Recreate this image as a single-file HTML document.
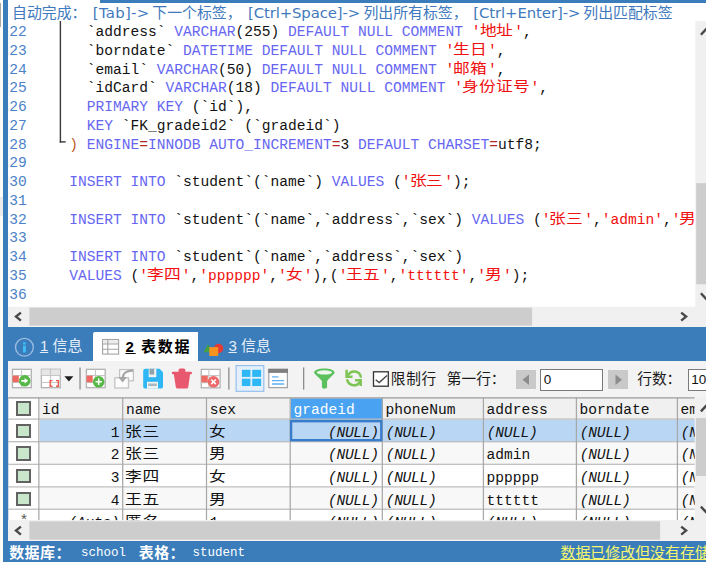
<!DOCTYPE html>
<html><head><meta charset="utf-8"><title>SQLyog</title>
<style>
html,body{margin:0;padding:0;}
body{width:706px;height:562px;overflow:hidden;position:relative;background:#fff;font-family:"Liberation Sans","Noto Sans CJK SC",sans-serif;}
div,span{box-sizing:border-box;}
.abs{position:absolute;}
#leftgrey{left:0;top:0;width:3.5px;height:562px;background:#fdfdfd;}
#leftblue{left:3.3px;top:0;width:4.8px;height:562px;background:#3b7dbb;}
#topblue{left:100px;top:0;width:606px;height:2.8px;background:#3b7dbb;}
.hint{position:absolute;top:3.5px;height:19px;line-height:19px;font-size:14.9px;color:#4079bd;white-space:nowrap;}
.hint.l{font-family:"DejaVu Sans","Liberation Sans",sans-serif;}
/* code */
.ln{position:absolute;left:9.3px;height:18.75px;line-height:18.75px;font-family:"Liberation Mono",monospace;font-size:14.583px;color:#4b82c8;}
.cl{position:absolute;left:69.3px;height:18.75px;line-height:18.75px;font-family:"Liberation Mono",monospace;font-size:14.583px;color:#111;white-space:pre;max-width:624.3px;overflow:hidden;}
.k{color:#6666f2;}
.s{color:#f01010;}
.o{color:#b02828;}
.br{color:#c25a2a;}
.c{display:inline-block;width:16.87px;height:18.75px;line-height:15.5px;vertical-align:top;font-size:14.2px;position:relative;left:-1px;text-align:left;font-family:"Liberation Sans","Noto Sans CJK SC",sans-serif;font-weight:400;transform:scaleX(1.18);transform-origin:0 50%;}
#foldv{left:59.3px;top:21px;width:1.25px;height:121.5px;background:#3c3c3c;}
#foldh{left:59.3px;top:141.3px;width:6.6px;height:1.25px;background:#3c3c3c;}
/* scrollbars */
.sb{background:#f0f0f0;}
.thumb{background:#cdcdcd;}
.arr{position:absolute;font-family:"DejaVu Sans",sans-serif;color:#505050;font-weight:bold;}
/* tab bar */
#tabbar{left:8px;top:326.5px;width:698px;height:35px;background:#3b7dbb;}
#tabact{left:93px;top:332.2px;width:105px;height:29px;background:#fff;border-radius:2px 0 0 0;}
.tabtxt{position:absolute;font-size:15px;line-height:20px;white-space:nowrap;}
/* toolbar */
#toolbar{left:8px;top:361px;width:698px;height:36.2px;background:#f3f3f3;}
.sep{position:absolute;width:1.3px;background:#8a8a8a;top:367.5px;height:22px;}
.tbtxt{position:absolute;font-size:14.7px;line-height:20px;color:#1a1a1a;white-space:nowrap;top:369px;}
.inp{position:absolute;top:368.7px;height:22px;border:1.5px solid #7a7a7a;background:#fff;font-size:13.5px;line-height:20px;padding-left:2.5px;color:#111;}
.navb{position:absolute;top:369.6px;height:19.9px;width:20px;background:#c9c9c9;}
/* grid */
#gridbg{left:8px;top:397.2px;width:686px;height:123.3px;background:#fff;}
.gh,.gc{position:absolute;font-family:"Liberation Mono","Noto Serif CJK SC",monospace;font-size:14.583px;line-height:26.3px;color:#111;white-space:nowrap;overflow:hidden;padding-left:2.6px;}
.gh{background:#f0f0f0;line-height:27.3px;padding-left:2.6px;}
.ghsel{background:#4aa3f2;color:#fff;}
.gc{background:#fff;}
.gc.sel{background:#b9d7f5;}
.gc.alt{background:#f8f8f8;}
.gc.gcb,.gh.gcb,.gc.gcb.alt{background:#fff;}
.gc.r{text-align:right;padding-right:3.7px;}
.gc.nul{font-style:italic;letter-spacing:-0.3px;padding-left:2.8px;}
.gc.nul.r{padding-right:4.2px;}
.gc.cj{padding-left:2px;}
.cjs{display:inline-block;font-size:14.2px;letter-spacing:0.63px;font-family:"Liberation Sans","Noto Sans CJK SC",sans-serif;font-weight:400;transform:scaleX(1.18);transform-origin:0 50%;line-height:22.5px;vertical-align:top;}
.gc.focus{}
.cbx{position:absolute;left:7.5px;top:4px;width:15px;height:14.5px;border:2px solid #626262;background:#c8e6c9;}
.gh .cbx{top:3.9px;}
.star{position:absolute;left:11.5px;top:-1px;font-size:15px;color:#555;}
#status{left:3.3px;top:540.7px;width:703px;height:21.3px;background:#3b7dbb;}
.st{position:absolute;top:544.3px;height:18px;line-height:18px;color:#fff;white-space:nowrap;}
</style></head><body>
<div id="leftgrey" class="abs"></div>
<div id="leftblue" class="abs"></div>
<div id="topblue" class="abs"></div>
<div class="abs" style="left:0;top:2.5px;width:1px;height:24.5px;background:#a8a8a8"></div>
<div class="abs" style="left:0;top:197px;width:3.3px;height:19px;background:#ececec"></div>

<span class="hint" style="left:12px">自动完成：</span>
<span class="hint l" style="left:92.8px;letter-spacing:0.28px">[Tab]-&gt;</span>
<span class="hint" style="left:152.3px">下一个标签，</span>
<span class="hint l" style="left:248px;letter-spacing:-0.13px">[Ctrl+Space]-&gt;</span>
<span class="hint" style="left:363.4px">列出所有标签，</span>
<span class="hint l" style="left:473.3px;letter-spacing:-0.1px">[Ctrl+Enter]-&gt;</span>
<span class="hint" style="left:583.3px">列出匹配标签</span>

<svg class="abs" style="left:50px;top:20px" width="30" height="130" viewBox="50 20 30 130"><rect x="59.7" y="21" width="1.4" height="121.6" fill="#3a3a3a"/><rect x="59.7" y="141.2" width="6" height="1.4" fill="#3a3a3a"/></svg>
<div class="ln" style="top:23.20px">22</div><div class="cl" style="top:23.20px">  `address` <span class="k">VARCHAR</span>(255) <span class="k">DEFAULT NULL COMMENT </span><span class="s">'<span class="c">地</span><span class="c">址</span>'</span>,</div>
<div class="ln" style="top:41.95px">23</div><div class="cl" style="top:41.95px">  `borndate` <span class="k">DATETIME DEFAULT NULL COMMENT </span><span class="s">'<span class="c">生</span><span class="c">日</span>'</span>,</div>
<div class="ln" style="top:60.70px">24</div><div class="cl" style="top:60.70px">  `email` <span class="k">VARCHAR</span>(50) <span class="k">DEFAULT NULL COMMENT </span><span class="s">'<span class="c">邮</span><span class="c">箱</span>'</span>,</div>
<div class="ln" style="top:79.45px">25</div><div class="cl" style="top:79.45px">  `idCard` <span class="k">VARCHAR</span>(18) <span class="k">DEFAULT NULL COMMENT </span><span class="s">'<span class="c">身</span><span class="c">份</span><span class="c">证</span><span class="c">号</span>'</span>,</div>
<div class="ln" style="top:98.20px">26</div><div class="cl" style="top:98.20px">  <span class="k">PRIMARY KEY </span>(`id`),</div>
<div class="ln" style="top:116.95px">27</div><div class="cl" style="top:116.95px">  <span class="k">KEY </span>`FK_gradeid2` (`gradeid`)</div>
<div class="ln" style="top:135.70px">28</div><div class="cl" style="top:135.70px"><span class="br">)</span> <span class="k">ENGINE</span><span class="o">=</span><span class="k">INNODB AUTO_INCREMENT</span><span class="o">=</span>3 <span class="k">DEFAULT CHARSET</span><span class="o">=</span>utf8;</div>
<div class="ln" style="top:154.45px">29</div>
<div class="ln" style="top:173.20px">30</div><div class="cl" style="top:173.20px"><span class="k">INSERT INTO </span>`student`(`name`) <span class="k">VALUES </span>(<span class="s">'<span class="c">张</span><span class="c">三</span>'</span>);</div>
<div class="ln" style="top:191.95px">31</div>
<div class="ln" style="top:210.70px">32</div><div class="cl" style="top:210.70px"><span class="k">INSERT INTO </span>`student`(`name`,`address`,`sex`) <span class="k">VALUES </span>(<span class="s">'<span class="c">张</span><span class="c">三</span>'</span>,<span class="s">'admin'</span>,<span class="s">'<span class="c">男</span>'</span>);</div>
<div class="ln" style="top:229.45px">33</div>
<div class="ln" style="top:248.20px">34</div><div class="cl" style="top:248.20px"><span class="k">INSERT INTO </span>`student`(`name`,`address`,`sex`)</div>
<div class="ln" style="top:266.95px">35</div><div class="cl" style="top:266.95px"><span class="k">VALUES </span>(<span class="s">'<span class="c">李</span><span class="c">四</span>'</span>,<span class="s">'pppppp'</span>,<span class="s">'<span class="c">女</span>'</span>),(<span class="s">'<span class="c">王</span><span class="c">五</span>'</span>,<span class="s">'tttttt'</span>,<span class="s">'<span class="c">男</span>'</span>);</div>
<div class="ln" style="top:285.70px">36</div>

<!-- code scrollbars -->
<svg class="abs" style="left:0;top:20px" width="706" height="308" viewBox="0 20 706 308">
<rect x="695.3" y="21" width="11" height="286" fill="#f0f0f0"/>
<rect x="696.2" y="183.2" width="10" height="101.1" fill="#cdcdcd"/>
<rect x="8" y="306.8" width="698" height="20" fill="#f0f0f0"/>
<rect x="29.4" y="307.6" width="502.7" height="18.1" fill="#cdcdcd"/>
<path d="M20.9 312.6 L16 316.6 L20.9 320.6" fill="none" stroke="#484848" stroke-width="2.4"/>
<path d="M681.2 312.6 L686.1 316.6 L681.2 320.6" fill="none" stroke="#484848" stroke-width="2.4"/>
<path d="M700.9 34.8 L706 29.3 L711 34.8" fill="none" stroke="#484848" stroke-width="2.4"/>
<path d="M700.9 293.2 L706 298.7 L711 293.2" fill="none" stroke="#484848" stroke-width="2.4"/>
</svg>

<!-- tab bar -->
<div id="tabbar" class="abs"></div>
<div id="tabact" class="abs"></div>
<svg class="abs" style="left:0;top:326px" width="706" height="36" viewBox="0 326 706 36">
<circle cx="24.4" cy="347.3" r="8.9" fill="none" stroke="#9dbde2" stroke-width="1.3"/><rect x="23" y="345.6" width="2.9" height="6.9" fill="#3fbcf5"/><rect x="23" y="342.4" width="2.9" height="2.1" fill="#3fbcf5"/>
<rect x="102.6" y="339.5" width="16" height="14.6" fill="#fff" stroke="#a4a4a4" stroke-width="1.1"/><rect x="103.2" y="340.1" width="14.8" height="3.6" fill="#ececec"/><path d="M102.6 344H118.6M102.6 349.2H118.6M107.8 339.5V354.1" stroke="#a4a4a4" stroke-width="1.1" fill="none"/>
<circle cx="218.6" cy="348.5" r="4.7" fill="#e53935"/><path d="M203.4 352.2L207.9 344.2L212.4 352.2Z" fill="#43a047"/><rect x="209.3" y="347.1" width="8.9" height="8.9" fill="#f7931e"/>
</svg>
<span class="tabtxt" style="left:39.9px;top:335.6px;color:#e4edf7"><u>1</u> 信息</span>
<span class="tabtxt" style="left:125.5px;top:336.5px;color:#000;font-weight:bold;letter-spacing:1.8px;word-spacing:-0.6px"><u>2</u> 表数据</span>
<span class="tabtxt" style="left:228.5px;top:335.6px;color:#e4edf7"><u>3</u> 信息</span>

<!-- toolbar -->
<div id="toolbar" class="abs"></div>
<svg class="abs" style="left:0;top:361px" width="706" height="38" viewBox="0 361 706 38">
<rect x="12.5" y="369.3" width="18.8" height="18.4" fill="#fff" stroke="#b2b2b2" stroke-width="1.3"/><path d="M12.0 375.5H31.8M12.0 382.5H31.8M21.6 368.8V388.2" stroke="#c6c6c6" stroke-width="1.1" fill="none"/><rect x="12.6" y="375.6" width="6.2" height="6.6" fill="#ef6a62"/><circle cx="24.7" cy="380.8" r="5.8" fill="#56b947"/><path d="M21.3 379.9H24.6V378L28.2 380.8L24.6 383.6V381.7H21.3Z" fill="#fff"/>
<rect x="41.4" y="369.3" width="18.8" height="18.4" fill="#fff" stroke="#b2b2b2" stroke-width="1.3"/><path d="M40.9 375.5H60.7M40.9 382.5H60.7M50.5 368.8V388.2" stroke="#c6c6c6" stroke-width="1.1" fill="none"/><rect x="41.5" y="369.4" width="18.6" height="6" fill="#e6e6e6"/><path d="M40.9 375.5H60.7M50.5 368.8V388.2" stroke="#c6c6c6" stroke-width="1.1" fill="none"/><path d="M52.5 380.6H50.2V386.3H52.5M56 380.6H58.3V386.3H56" stroke="#ef5a4e" stroke-width="1.4" fill="none"/><path d="M64.4 376.2H73.4L68.9 381.6Z" fill="#1e1e1e"/>
<rect x="79.4" y="367.5" width="1.3" height="22" fill="#8c8c8c"/>
<rect x="86.4" y="369.3" width="18.8" height="18.4" fill="#fff" stroke="#b2b2b2" stroke-width="1.3"/><path d="M85.9 375.5H105.7M85.9 382.5H105.7M95.5 368.8V388.2" stroke="#c6c6c6" stroke-width="1.1" fill="none"/><rect x="86.5" y="375.6" width="6.2" height="6.6" fill="#ef6a62"/><circle cx="98.7" cy="381.8" r="5.8" fill="#56b947"/><path d="M95.5 381.8H101.9M98.7 378.6V385" stroke="#fff" stroke-width="1.5" fill="none"/>
<rect x="119.6" y="369.6" width="13.8" height="11.2" fill="#fcfcfc" stroke="#c4c4c4" stroke-width="1.3"/><rect x="114.8" y="377.8" width="13.7" height="10.2" fill="#fcfcfc" stroke="#c4c4c4" stroke-width="1.3"/><path d="M133 370.6C126.5 370.3 122.7 373.3 122.6 378.5" stroke="#a6a6a6" stroke-width="2.1" fill="none"/><path d="M118.2 377H127L122.6 382.5Z" fill="#a6a6a6"/>
<path d="M143.2 371Q143.2 368.8 145.4 368.8H159.6L163 372.2V386.4Q163 388.6 160.8 388.6H145.4Q143.2 388.6 143.2 386.4Z" fill="#2fb7f5"/><rect x="148.7" y="368.8" width="7.6" height="8.4" fill="#f4f4f4"/><rect x="149.5" y="368.8" width="4.7" height="5.8" fill="#8fa3ad"/><rect x="147" y="381.8" width="11" height="6.8" fill="#f4f4f4"/><rect x="148.2" y="383.5" width="8.6" height="2.6" fill="#a9b8c0"/>
<g fill="#e8586e"><rect x="178.6" y="368.4" width="6.8" height="5" rx="1.7"/><rect x="171.8" y="371.7" width="20.2" height="2.6" rx="1.2"/><path d="M173.8 374H190.1L188.3 387Q188.1 388.6 186.5 388.6H177.6Q176 388.6 175.8 387Z"/></g>
<rect x="201.3" y="369.4" width="18.8" height="18.4" fill="#fff" stroke="#b2b2b2" stroke-width="1.3"/><path d="M200.8 375.6H220.6M200.8 382.6H220.6M208.9 368.9V388.3" stroke="#c6c6c6" stroke-width="1.1" fill="none"/><rect x="201.4" y="375.7" width="6.4" height="6.6" fill="#ef6a62"/><circle cx="213.5" cy="381.8" r="5.8" fill="#ee6a6a"/><path d="M211.2 379.5L215.8 384.1M215.8 379.5L211.2 384.1" stroke="#fff" stroke-width="1.5" fill="none"/>
<rect x="228.2" y="367.4" width="1.3" height="22.2" fill="#8c8c8c"/>
<rect x="236.1" y="365.6" width="27.7" height="25.7" fill="#e3effb" stroke="#8fbcee" stroke-width="1.1"/><rect x="241.9" y="369.8" width="8.5" height="7.1" fill="#2db8f5"/><rect x="252.2" y="369.8" width="8.9" height="7.1" fill="#2db8f5"/><rect x="241.9" y="378.7" width="8.5" height="7.3" fill="#2db8f5"/><rect x="252.2" y="378.7" width="8.9" height="7.3" fill="#2db8f5"/>
<rect x="268.8" y="369.4" width="18.6" height="18.2" fill="#fff" stroke="#a2a2a2" stroke-width="1.2"/><rect x="268.2" y="368.8" width="19.8" height="4.1" fill="#808080"/><path d="M272 376.9H278.4M272 380.7H284.2M272 384H284.2" stroke="#5eb2f4" stroke-width="1.3"/>
<rect x="303" y="367.4" width="1.3" height="22.2" fill="#8c8c8c"/>
<path d="M314.1 372.6C314.1 367 334.6 367 334.6 372.6C334.6 374 332 375.5 327.1 381V387.1Q327.1 388.8 324.5 388.8Q321.9 388.8 321.9 387.1V381C317 375.5 314.1 374 314.1 372.6Z" fill="#5cc05c"/><ellipse cx="324.4" cy="372.4" rx="7.7" ry="2.1" fill="#eef8ee"/>
<g fill="none" stroke="#7fc556" stroke-width="2.5" stroke-linecap="round"><path d="M360.8 376.6A6.9 6.9 0 0 0 348.3 374.6"/><path d="M347.3 380.2A6.9 6.9 0 0 0 359.7 382.2"/></g><g fill="none" stroke="#7fc556" stroke-width="2.5"><path d="M346.6 369.7V376.7H352.5"/><path d="M355.1 380.2H360.7V386"/></g>
<rect x="373.5" y="371.8" width="14.8" height="14.4" fill="#fff" stroke="#333" stroke-width="1.3"/><path d="M375.7 379.7L379.2 382.6L387 375.5" fill="none" stroke="#444" stroke-width="1.3"/>
</svg>
<span class="tbtxt" style="left:390.7px;letter-spacing:0.75px">限制行</span>
<span class="tbtxt" style="left:446.8px">第一行：</span>
<div class="navb" style="left:515.6px"><svg width="20" height="20" viewBox="0 0 20 20"><path d="M13 4.5V15L6.5 9.7Z" fill="#8c8c8c"/></svg></div>
<div class="inp" style="left:540.3px;width:62.7px">0</div>
<div class="navb" style="left:608.2px"><svg width="20" height="20" viewBox="0 0 20 20"><path d="M7.5 4.5V15L14 9.7Z" fill="#8c8c8c"/></svg></div>
<span class="tbtxt" style="left:637.2px">行数：</span>
<div class="inp" style="left:687.8px;width:30px">10</div>

<!-- grid -->
<div id="gridbg" class="abs"></div>
<div class="gh gcb" style="left:8px;top:397.2px;width:31.5px;height:22.5px"><span class="cbx"></span></div><div class="gh" style="left:39.5px;top:397.2px;width:83.8px;height:22.5px">id</div><div class="gh" style="left:123.3px;top:397.2px;width:83.8px;height:22.5px">name</div><div class="gh" style="left:207.1px;top:397.2px;width:83.70000000000002px;height:22.5px">sex</div><div class="gh ghsel" style="left:290.8px;top:397.2px;width:92.09999999999997px;height:22.5px">gradeid</div><div class="gh" style="left:382.9px;top:397.2px;width:101.10000000000002px;height:22.5px">phoneNum</div><div class="gh" style="left:484px;top:397.2px;width:93px;height:22.5px">address</div><div class="gh" style="left:577px;top:397.2px;width:101px;height:22.5px">borndate</div><div class="gh" style="left:678px;top:397.2px;width:16.700000000000045px;height:22.5px">em</div>
<div class="gc gcb" style="left:8px;top:419.7px;width:31.5px;height:22.600000000000023px"><span class="cbx"></span></div><div class="gc sel r" style="left:39.5px;top:419.7px;width:83.8px;height:22.600000000000023px">1</div><div class="gc sel cj" style="left:123.3px;top:419.7px;width:83.8px;height:22.600000000000023px"><span class="cjs">张三</span></div><div class="gc sel cj" style="left:207.1px;top:419.7px;width:83.70000000000002px;height:22.600000000000023px"><span class="cjs">女</span></div><div class="gc sel nul r focus" style="left:290.8px;top:419.7px;width:92.09999999999997px;height:22.600000000000023px">(NULL)</div><div class="gc sel nul" style="left:382.9px;top:419.7px;width:101.10000000000002px;height:22.600000000000023px">(NULL)</div><div class="gc sel nul" style="left:484px;top:419.7px;width:93px;height:22.600000000000023px">(NULL)</div><div class="gc sel nul" style="left:577px;top:419.7px;width:101px;height:22.600000000000023px">(NULL)</div><div class="gc sel nul" style="left:678px;top:419.7px;width:16.700000000000045px;height:22.600000000000023px">(N</div>
<div class="gc gcb" style="left:8px;top:442.3px;width:31.5px;height:22.599999999999966px"><span class="cbx"></span></div><div class="gc alt r" style="left:39.5px;top:442.3px;width:83.8px;height:22.599999999999966px">2</div><div class="gc alt cj" style="left:123.3px;top:442.3px;width:83.8px;height:22.599999999999966px"><span class="cjs">张三</span></div><div class="gc alt cj" style="left:207.1px;top:442.3px;width:83.70000000000002px;height:22.599999999999966px"><span class="cjs">男</span></div><div class="gc alt nul r" style="left:290.8px;top:442.3px;width:92.09999999999997px;height:22.599999999999966px">(NULL)</div><div class="gc alt nul" style="left:382.9px;top:442.3px;width:101.10000000000002px;height:22.599999999999966px">(NULL)</div><div class="gc alt" style="left:484px;top:442.3px;width:93px;height:22.599999999999966px">admin</div><div class="gc alt nul" style="left:577px;top:442.3px;width:101px;height:22.599999999999966px">(NULL)</div><div class="gc alt nul" style="left:678px;top:442.3px;width:16.700000000000045px;height:22.599999999999966px">(N</div>
<div class="gc gcb" style="left:8px;top:464.9px;width:31.5px;height:22.600000000000023px"><span class="cbx"></span></div><div class="gc r" style="left:39.5px;top:464.9px;width:83.8px;height:22.600000000000023px">3</div><div class="gc cj" style="left:123.3px;top:464.9px;width:83.8px;height:22.600000000000023px"><span class="cjs">李四</span></div><div class="gc cj" style="left:207.1px;top:464.9px;width:83.70000000000002px;height:22.600000000000023px"><span class="cjs">女</span></div><div class="gc nul r" style="left:290.8px;top:464.9px;width:92.09999999999997px;height:22.600000000000023px">(NULL)</div><div class="gc nul" style="left:382.9px;top:464.9px;width:101.10000000000002px;height:22.600000000000023px">(NULL)</div><div class="gc" style="left:484px;top:464.9px;width:93px;height:22.600000000000023px">pppppp</div><div class="gc nul" style="left:577px;top:464.9px;width:101px;height:22.600000000000023px">(NULL)</div><div class="gc nul" style="left:678px;top:464.9px;width:16.700000000000045px;height:22.600000000000023px">(N</div>
<div class="gc gcb" style="left:8px;top:487.5px;width:31.5px;height:22.30000000000001px"><span class="cbx"></span></div><div class="gc alt r" style="left:39.5px;top:487.5px;width:83.8px;height:22.30000000000001px">4</div><div class="gc alt cj" style="left:123.3px;top:487.5px;width:83.8px;height:22.30000000000001px"><span class="cjs">王五</span></div><div class="gc alt cj" style="left:207.1px;top:487.5px;width:83.70000000000002px;height:22.30000000000001px"><span class="cjs">男</span></div><div class="gc alt nul r" style="left:290.8px;top:487.5px;width:92.09999999999997px;height:22.30000000000001px">(NULL)</div><div class="gc alt nul" style="left:382.9px;top:487.5px;width:101.10000000000002px;height:22.30000000000001px">(NULL)</div><div class="gc alt" style="left:484px;top:487.5px;width:93px;height:22.30000000000001px">tttttt</div><div class="gc alt nul" style="left:577px;top:487.5px;width:101px;height:22.30000000000001px">(NULL)</div><div class="gc alt nul" style="left:678px;top:487.5px;width:16.700000000000045px;height:22.30000000000001px">(N</div>
<div class="gc gcb" style="left:8px;top:509.8px;width:31.5px;height:22.599999999999966px"><span class="star">*</span></div><div class="gc nul r" style="left:39.5px;top:509.8px;width:83.8px;height:22.599999999999966px">(Auto)</div><div class="gc cj" style="left:123.3px;top:509.8px;width:83.8px;height:22.599999999999966px"><span class="cjs">匿名</span></div><div class="gc" style="left:207.1px;top:509.8px;width:83.70000000000002px;height:22.599999999999966px">1</div><div class="gc nul r" style="left:290.8px;top:509.8px;width:92.09999999999997px;height:22.599999999999966px">(NULL)</div><div class="gc nul" style="left:382.9px;top:509.8px;width:101.10000000000002px;height:22.599999999999966px">(NULL)</div><div class="gc nul" style="left:484px;top:509.8px;width:93px;height:22.599999999999966px">(NULL)</div><div class="gc nul" style="left:577px;top:509.8px;width:101px;height:22.599999999999966px">(NULL)</div><div class="gc nul" style="left:678px;top:509.8px;width:16.700000000000045px;height:22.599999999999966px">(N</div>
<svg class="abs" style="left:0;top:396px" width="706" height="125" viewBox="0 396 706 125"><rect x="8" y="397" width="686.7" height="1.7" fill="#b2b2b2"/><rect x="8" y="398.7" width="1" height="121.6" fill="#cfdbe9"/><rect x="8" y="418.48" width="686.7" height="1.25" fill="#bdbdbd"/><rect x="8" y="441.08" width="686.7" height="1.25" fill="#bdbdbd"/><rect x="8" y="463.68" width="686.7" height="1.25" fill="#bdbdbd"/><rect x="8" y="486.28" width="686.7" height="1.25" fill="#bdbdbd"/><rect x="8" y="508.58" width="686.7" height="1.25" fill="#bdbdbd"/><rect x="38.23" y="397" width="1.25" height="123.3" fill="#a8a8a8"/><rect x="122.08" y="397" width="1.25" height="123.3" fill="#a8a8a8"/><rect x="205.88" y="397" width="1.25" height="123.3" fill="#a8a8a8"/><rect x="289.58" y="397" width="1.25" height="123.3" fill="#a8a8a8"/><rect x="381.68" y="397" width="1.25" height="123.3" fill="#a8a8a8"/><rect x="482.78" y="397" width="1.25" height="123.3" fill="#a8a8a8"/><rect x="575.78" y="397" width="1.25" height="123.3" fill="#a8a8a8"/><rect x="676.78" y="397" width="1.25" height="123.3" fill="#a8a8a8"/><rect x="291.1" y="421.2" width="90.2" height="19" fill="none" stroke="#3a7ccc" stroke-width="2.4"/></svg>
<!-- grid scrollbars -->
<svg class="abs" style="left:0;top:396px" width="706" height="146" viewBox="0 396 706 146">
<rect x="694.7" y="397" width="12" height="124" fill="#f0f0f0"/>
<rect x="695.9" y="418.1" width="11" height="57.9" fill="#cdcdcd"/>
<rect x="8" y="520.1" width="698" height="20.6" fill="#f0f0f0"/>
<rect x="29.4" y="521.3" width="630.7" height="18.4" fill="#cdcdcd"/>
<path d="M20.9 526.6 L16 530.6 L20.9 534.6" fill="none" stroke="#484848" stroke-width="2.4"/>
<path d="M681.2 526.6 L686.1 530.6 L681.2 534.6" fill="none" stroke="#484848" stroke-width="2.4"/>
<path d="M700.9 411.4 L705.6 406.3 L710.3 411.4" fill="none" stroke="#484848" stroke-width="2.4"/>
<path d="M700.9 506.6 L705.6 511.7 L710.3 506.6" fill="none" stroke="#484848" stroke-width="2.4"/>
</svg>

<!-- status -->
<div id="status" class="abs"></div>
<span class="st" style="left:9.2px;font-weight:bold;font-size:15px;letter-spacing:0.4px">数据库：</span>
<span class="st" style="left:81px;font-family:'Liberation Mono',monospace;font-size:12.5px">school</span>
<span class="st" style="left:138.8px;font-weight:bold;font-size:15px;letter-spacing:0.4px">表格：</span>
<span class="st" style="left:192.6px;font-family:'Liberation Mono',monospace;font-size:12.5px">student</span>
<span class="st" style="left:560.5px;font-size:14.95px;color:#f6f66e;text-decoration:underline;top:544px">数据已修改但没有存储</span>
</body></html>
